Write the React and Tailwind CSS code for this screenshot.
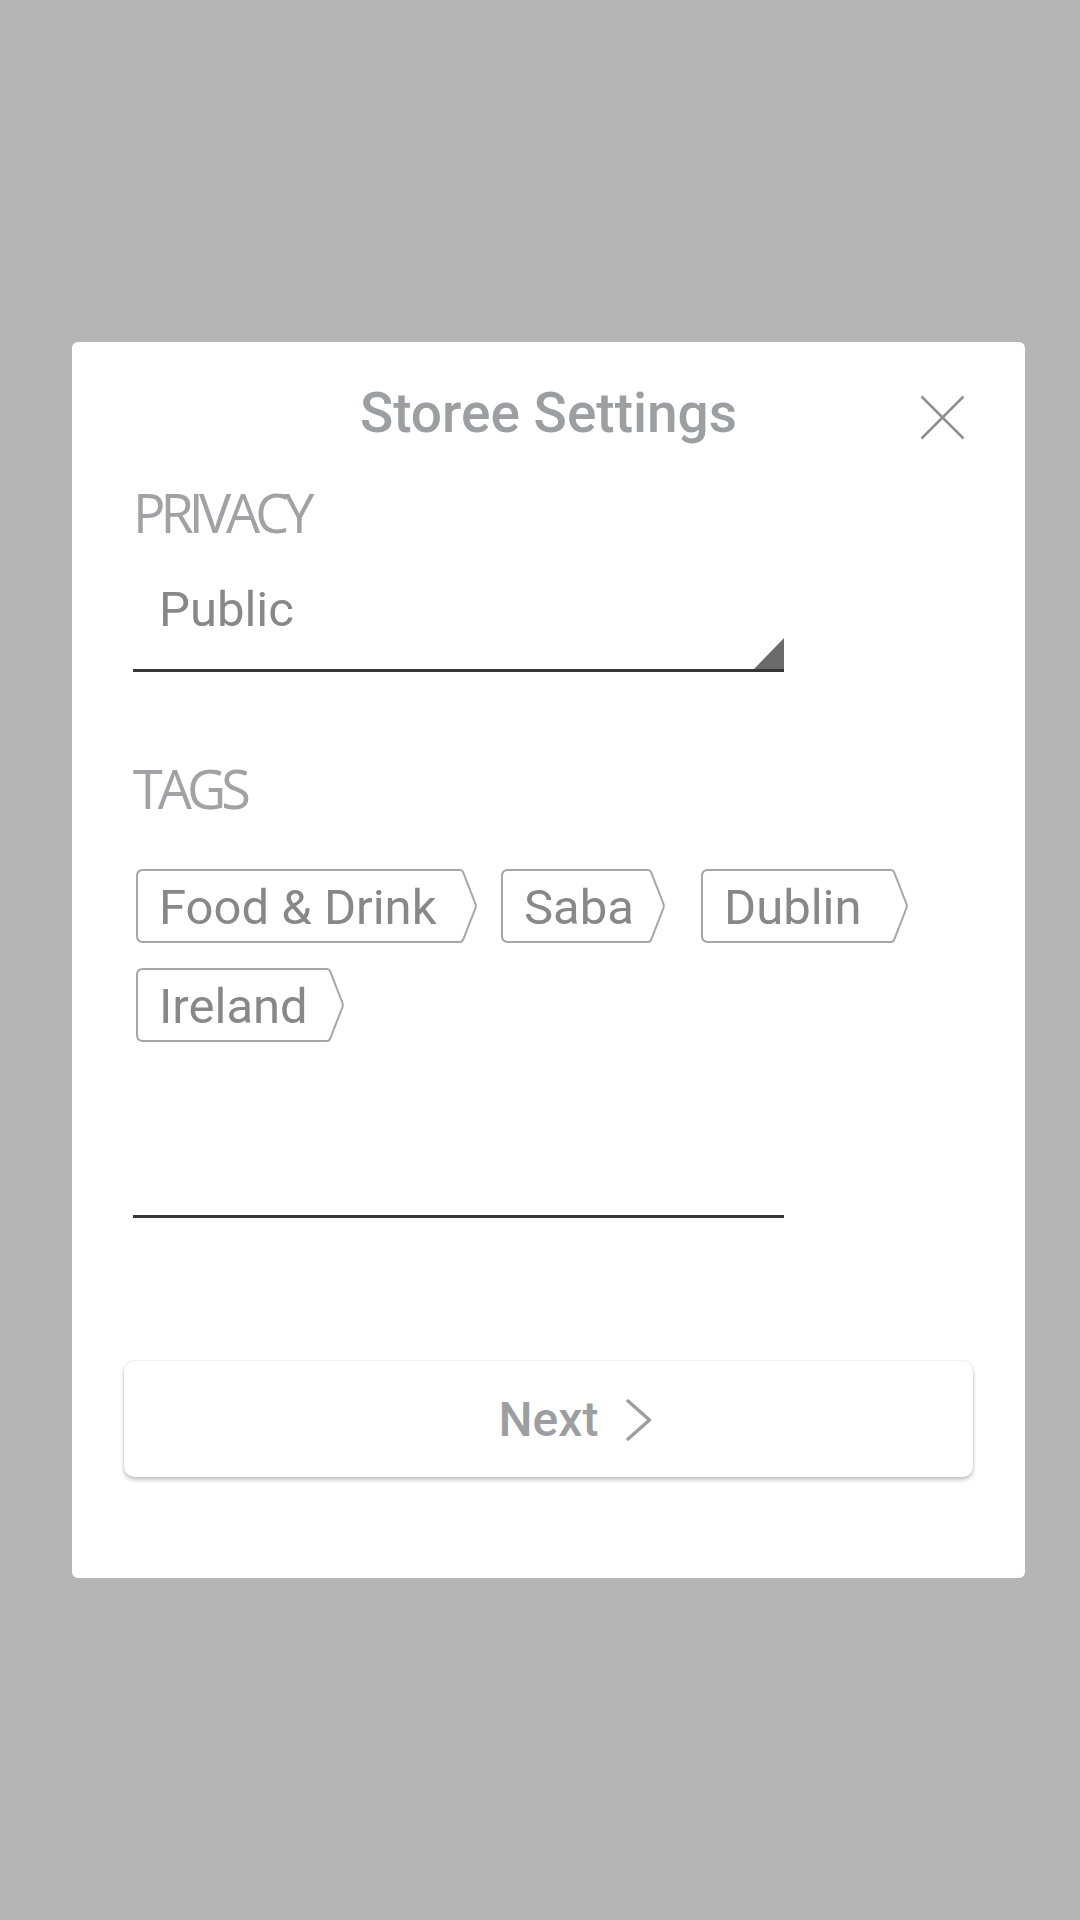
import React from "react";

const tags = [
  { label: "Food & Drink", w: 341 },
  { label: "Saba", w: 164, ml: "" },
  { label: "Dublin", w: 207, ml: "ml-[12px]" },
  { label: "Ireland", w: 208 },
];

function Tag({ label, w, ml }) {
  const H = 74;
  const d = `M7 1 H${w - 17} Q${w - 15} 1 ${w - 14} 3 L${w - 1.5} ${H / 2 - 2} Q${w - 1} ${H / 2} ${w - 1.5} ${H / 2 + 2} L${w - 14} ${H - 3} Q${w - 15} ${H - 1} ${w - 17} ${H - 1} H7 Q1 ${H - 1} 1 ${H - 7} V7 Q1 1 7 1 Z`;
  return (
    <div className={`relative h-[74px] flex items-center pl-[23px] ${ml || ""}`} style={{ width: w }}>
      <svg className="absolute inset-0" width={w} height={H} viewBox={`0 0 ${w} ${H}`} fill="none">
        <path d={d} stroke="#a6a6a6" strokeWidth="2" />
      </svg>
      <span className="relative text-[49px] leading-none text-[#888888] font-['Roboto',sans-serif] pt-[2px]">{label}</span>
    </div>
  );
}

export default function App() {
  return (
    <div className="min-h-[1920px] w-[1080px] bg-[#b5b5b5] pt-[342px] pl-[72px]">
      <div className="relative w-[953px] h-[1236px] bg-white rounded-[6px]">
        {/* close */}
        <button className="absolute top-[53px] right-[60px] w-[45px] h-[45px]">
          <svg width="45" height="45" viewBox="0 0 45 45" fill="none" stroke="#8f8f8f" strokeWidth="2.5">
            <path d="M1.5 1.5 L43.5 43.5 M43.5 1.5 L1.5 43.5" />
          </svg>
        </button>

        <h1 className="pt-[44px] text-center text-[55px] leading-none font-medium text-[#9d9ea2] font-['Roboto',sans-serif]">
          Storee Settings
        </h1>

        <div className="pl-[61px]">
          <div className="mt-[44px] text-[54px] leading-none tracking-[-5px] text-[#a2a2a6] font-['Open_Sans',sans-serif]">
            PRIVACY
          </div>

          <div className="relative mt-[46px] w-[651px]">
            <div className="h-[84px] pl-[26px] text-[49px] leading-none text-[#888888] font-['Roboto',sans-serif]">
              Public
            </div>
            <div className="h-[3px] bg-[#363636]" />
            <svg className="absolute right-0 bottom-0" width="30" height="34" viewBox="0 0 30 34">
              <path d="M0 31 L30 0 L30 34 L0 34 Z" fill="#6b6b6b" />
              <rect x="0" y="31" width="30" height="3" fill="#363636" />
            </svg>
          </div>

          <div className="mt-[89px] text-[54px] leading-none tracking-[-5px] text-[#a2a2a6] font-['Open_Sans',sans-serif]">
            TAGS
          </div>

          <div className="mt-[54px] ml-[3px] w-[800px] flex flex-wrap gap-x-[24px] gap-y-[25px]">
            {tags.map(t => <Tag key={t.label} {...t} />)}
          </div>

          <div className="mt-[173px] w-[651px] h-[3px] bg-[#363636]" />
        </div>

        <div className="mx-[52px] mt-[143px] h-[116px] rounded-[10px] bg-white shadow-[0_0_2px_rgba(0,0,0,0.15),0_3px_4px_rgba(0,0,0,0.22)] flex items-center justify-center pt-[2px]">
          <span className="relative text-[48px] leading-none font-medium text-[#9d9ea2] font-['Roboto',sans-serif]">
            Next
            <svg className="absolute left-full ml-[28px] top-1/2 -translate-y-1/2" width="27" height="42" viewBox="0 0 27 42" fill="none" stroke="#9d9ea2" strokeWidth="3.5" strokeLinecap="round" strokeLinejoin="round">
              <path d="M2 2 L23.5 21 L2 40" />
            </svg>
          </span>
        </div>
      </div>
    </div>
  );
}
